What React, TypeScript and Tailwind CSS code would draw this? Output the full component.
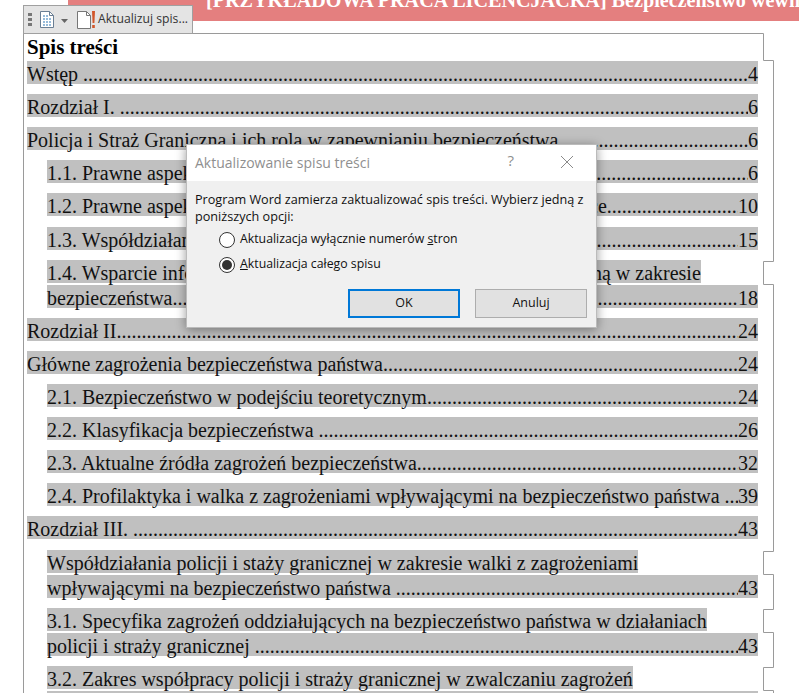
import React from "react";

const serif = "font-['Liberation_Serif',serif]";
const ui = "font-['Open_Sans',sans-serif]";

type Entry = {
  first?: string;
  text: string;
  page: string;
  indent?: boolean;
};

const entries: Entry[] = [
  { text: "Wstęp ", page: "4" },
  { text: "Rozdział I. ", page: "6" },
  { text: "Policja i Straż Graniczna i ich rola w zapewnianiu bezpieczeństwa", page: "6" },
  { text: "1.1. Prawne aspekty działania policji ", page: "6", indent: true },
  { text: "1.2. Prawne aspekty działalności formacji Straży Granicznej w Polsce", page: "10", indent: true },
  { text: "1.3. Współdziałanie policji i Straży Granicznej z wieloma służbami", page: "15", indent: true },
  {
    first: "1.4. Wsparcie informacyjne we współpracy policji ze Strażą graniczną w zakresie",
    text: "bezpieczeństwa",
    page: "18",
    indent: true,
  },
  { text: "Rozdział II.", page: "24" },
  { text: "Główne zagrożenia bezpieczeństwa państwa", page: "24" },
  { text: "2.1. Bezpieczeństwo w podejściu teoretycznym", page: "24", indent: true },
  { text: "2.2. Klasyfikacja bezpieczeństwa ", page: "26", indent: true },
  { text: "2.3. Aktualne źródła zagrożeń bezpieczeństwa", page: "32", indent: true },
  { text: "2.4. Profilaktyka i walka z zagrożeniami wpływającymi na bezpieczeństwo państwa ", page: "39", indent: true },
  { text: "Rozdział III. ", page: "43" },
  {
    first: "Współdziałania policji i staży granicznej w zakresie walki z zagrożeniami",
    text: "wpływającymi na bezpieczeństwo państwa ",
    page: "43",
    indent: true,
  },
  {
    first: "3.1. Specyfika zagrożeń oddziałujących na bezpieczeństwo państwa w działaniach",
    text: "policji i straży granicznej ",
    page: "43",
    indent: true,
  },
  {
    first: "3.2. Zakres współpracy policji i straży granicznej w zwalczaniu zagrożeń",
    text: "wpływających na bezpieczeństwo państwa ",
    page: "47",
    indent: true,
  },
];

const DOTS = ".".repeat(220);

function TocRow({ entry }: { entry: Entry }) {
  return (
    <div className={`flex flex-col gap-[2px] ${entry.indent ? "pl-[20px]" : ""}`}>
      {entry.first && <div className="w-fit h-[23px] leading-[26px] bg-[#c0c0c0] whitespace-nowrap">{entry.first}</div>}
      <div className="flex h-[23px] leading-[26px] bg-[#c0c0c0] whitespace-pre">
        <span className="shrink-0">{entry.text}</span>
        <span className="flex-1 min-w-0 h-[26px] overflow-hidden">{DOTS}</span>
        <span className="shrink-0">{entry.page}</span>
      </div>
    </div>
  );
}

function ToolbarIcons() {
  return (
    <div className="flex items-center">
      <div className="flex flex-col gap-[2px] ml-[4px]">
        <div className="w-[4px] h-[3px] bg-[#777]" />
        <div className="w-[4px] h-[3px] bg-[#777]" />
        <div className="w-[4px] h-[3px] bg-[#777]" />
      </div>
      <svg width="16" height="19" viewBox="0 0 16 19" className="ml-[7px]">
        <path d="M1.5 1.5h9l4 4v12h-13z" fill="#fff" stroke="#6a7f94" />
        <path d="M10.5 1.5v4h4" fill="none" stroke="#6a7f94" />
        <path d="M4 6h5M4 9h8M4 12h8M4 15h8" stroke="#2f78b5" strokeWidth="1.2" strokeDasharray="2 1" />
      </svg>
      <svg width="8" height="5" viewBox="0 0 8 5" className="ml-[6px] mt-[4px]">
        <path d="M0 0h7L3.5 4z" fill="#666" />
      </svg>
      <svg width="22" height="20" viewBox="0 0 22 20" className="ml-[7px]">
        <path d="M1.5 1.5h9l4 4v13h-13z" fill="#fff" stroke="#777" />
        <path d="M10.5 1.5v4h4" fill="none" stroke="#777" />
        <path d="M16 1h3l-.6 12h-1.8z" fill="#d2562a" />
        <rect x="16.2" y="15" width="2.6" height="3" fill="#d2562a" />
      </svg>
    </div>
  );
}

function Radio({ checked, children }: { checked?: boolean; children: React.ReactNode }) {
  return (
    <div className="flex items-center gap-[5px] h-[25px]">
      <div className="w-[16px] h-[16px] rounded-full border border-[#333] bg-white flex items-center justify-center">
        {checked && <div className="w-[10px] h-[10px] rounded-full bg-[#333]" />}
      </div>
      <span className="text-[12.3px] text-[#111] whitespace-nowrap">{children}</span>
    </div>
  );
}

export default function App() {
  return (
    <div className={`relative w-[799px] h-[693px] overflow-hidden bg-white ${serif}`}>
      {/* pink document header, cut off at the top */}
      <div className="ml-[68px] h-[21px] bg-[#e47f7f] overflow-hidden whitespace-nowrap pl-[138px] text-white font-bold text-[20.15px] leading-[0px]">
        [PRZYKŁADOWA PRACA LICENCJACKA] Bezpieczeństwo wewnętrzne państwa
      </div>

      {/* table of contents */}
      <div className="ml-[27px] w-[731px] mt-[16px] text-[#111] text-[20px]">
        <div className="h-[24px] leading-[21px] font-bold text-[21px] text-black">Spis treści</div>
        <div className="flex flex-col gap-[10.12px]">
          {entries.map((entry, idx) => (
            <TocRow key={idx} entry={entry} />
          ))}
        </div>
      </div>

      {/* content control outline */}
      <svg width="799" height="693" className="absolute inset-0 pointer-events-none">
        <path
          d="M23.5 693V33.5H763.5V60.5H773.5V261.5H763.5V284.5H773.5V551.5H763.5V574.5H773.5V609.5H763.5V632.5H773.5V667.5H763.5V690.5H773.5V693"
          fill="none"
          stroke="#9a9a9a"
        />
      </svg>

      {/* content control tab */}
      <div className={`absolute left-[23px] top-[5px] w-[170px] h-[29px] bg-[#e4e4e4] border border-[#a0a0a0] flex items-center ${ui}`}>
        <ToolbarIcons />
        <span className="text-[12.2px] text-[#333] whitespace-nowrap">Aktualizuj spis...</span>
      </div>

      {/* dialog */}
      <div className={`absolute left-[186px] top-[144px] w-[411px] h-[184px] bg-[#f0f0f0] border border-[#bbb] shadow-[0_2px_10px_rgba(0,0,0,0.4)] ${ui}`}>
        <div className="h-[36px] bg-white flex items-center pl-[8px]">
          <span className="flex-1 text-[14px] text-[#8f8f8f] mb-[2px]">Aktualizowanie spisu treści</span>
          <span className="text-[15px] text-[#8f8f8f] mr-[46px] mb-[5px]">?</span>
          <svg width="14" height="14" viewBox="0 0 14 14" className="mr-[22px] mb-[2px]">
            <path d="M1 1l12 12M13 1L1 13" stroke="#8a8a8a" />
          </svg>
        </div>
        <div className="pl-[8px] pr-[8px] pt-[10px] text-[12.65px] leading-[17px] text-[#111]">
          Program Word zamierza zaktualizować spis treści. Wybierz jedną z poniższych opcji:
        </div>
        <div className="pl-[32px] pt-[2px] flex flex-col">
          <Radio>
            Aktualizacja wyłącznie numerów <u>s</u>tron
          </Radio>
          <Radio checked>
            <u>A</u>ktualizacja całego spisu
          </Radio>
        </div>
        <div className="flex justify-end gap-[15px] pr-[9px] pt-[12px]">
          <button className="w-[112px] h-[29px] bg-[#e1e1e1] border-2 border-[#0078d7] text-[12.5px] text-[#111]">OK</button>
          <button className="w-[112px] h-[29px] bg-[#e1e1e1] border border-[#adadad] text-[12.5px] text-[#111]">Anuluj</button>
        </div>
      </div>
    </div>
  );
}
